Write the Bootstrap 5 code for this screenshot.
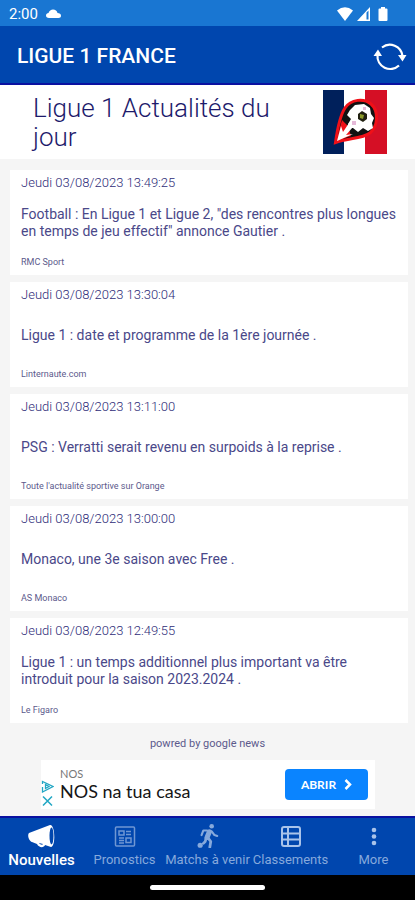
<!DOCTYPE html>
<html lang="fr">
<head>
<meta charset="utf-8">
<meta name="viewport" content="width=device-width, initial-scale=1">
<title>Ligue 1 France</title>
<link href="https://cdn.jsdelivr.net/npm/bootstrap@5.3.0/dist/css/bootstrap.min.css" rel="stylesheet">
<style>
  body { font-family: Roboto, "Liberation Sans", sans-serif; background: #f5f5f5; color: #1d1a6b; }
  svg { display: block; flex: none; }
  .status-bar { background: #1976d2; height: 26px; font-size: 15px; padding: 2px 27px 0 9px; }
  .app-bar { background: #0046ae; height: 59px; border-bottom: 2px solid #0a10a0; padding: 2px 8px 0 17px; }
  .app-title { font-size: 21px; font-weight: 500; line-height: 28px; }
  .hero { height: 74px; padding: 0 28px 0 33px; }
  .hero-title { font-size: 26px; font-weight: 300; line-height: 29px; max-width: 260px; padding-top: 2px; }
  .news { padding: 11px 7px 0 10px; gap: 7px; }
  .news-card { height: 105px; padding: 5px 9px 6px 11px; color: #4a4889; }
  .news-date { font-size: 13px; line-height: 16px; font-weight: 300; color: #2e2c78; }
  .news-title { font-size: 14px; line-height: 17px; }
  .news-source { font-size: 9px; line-height: 14px; color: #5c5a8c; }
  .powered { font-size: 11px; line-height: 14px; margin: 14px 0 9px; color: #5c5a8c; }
  .ad { margin: 0 40px 0 41px; height: 49px; padding-right: 7px; }
  .ad-marks { width: 15px; padding-top: 20px; gap: 3px; }
  .ad-brand { font-size: 11px; line-height: 12px; color: #777; }
  .ad-text { font-size: 18px; line-height: 22px; color: #151515; }
  .ad-text, .ad-brand, .ad-btn { font-family: Lato, sans-serif; }
  .ad-btn { background: #0a84ff; width: 83px; height: 31px; font-size: 12px; border-radius: 4px; }
  .tabs { background: #0046ae; border-top: 2px solid #0a10a0; height: 59px; }
  .tab { color: #86a9dc; font-size: 13px; line-height: 16px; padding-top: 6px; gap: 4px; flex: 1 1 0; min-width: 0; white-space: nowrap; }
  .tab.active { color: #fff; font-size: 15px; font-weight: 500; }
  .home-strip { height: 25px; }
  .home-pill { width: 115px; height: 5px; }
</style>
<script src="https://cdn.jsdelivr.net/npm/bootstrap@5.3.0/dist/js/bootstrap.bundle.min.js"></script>
</head>
<body class="min-vh-100 d-flex flex-column">
<div class="status-bar d-flex align-items-center text-white">
  <span>2:00</span>
  <svg class="ms-2" width="15" height="10" viewBox="0 0 15 10" fill="#fff"><path d="M3 9C1 9 0 8 0 6.500S1.200 4 2.500 4C3.200 2 5 .5 7 .5c2.300 0 4.100 1.500 4.500 3.500C13.500 4 15 5 15 6.700 15 8 14 9 12.500 9z"/></svg>
  <div class="ms-auto d-flex align-items-center">
    <svg width="16" height="14" viewBox="0 0 16 14" fill="#fff"><path d="M0 3.500Q8-3 16 3.500L8 14z"/></svg>
    <svg class="ms-1 me-2" width="13" height="14" viewBox="0 0 13 14" fill="#fff"><path fill-rule="evenodd" d="M0 14L13 0v14zM9.500 5.500v7H11.500V3.500z"/></svg>
    <svg width="10" height="14" viewBox="0 0 10 14" fill="#fff"><path d="M3 0h4v1.500h1.500q1 0 1 1v10.500q0 1-1 1h-7q-1 0-1-1V2.500q0-1 1-1H3z"/></svg>
  </div>
</div>
<header class="app-bar d-flex align-items-center justify-content-between text-white">
  <div class="app-title">LIGUE 1 FRANCE</div>
  <button type="button" class="btn p-0 border-0" aria-label="Actualiser">
    <svg width="34" height="30" viewBox="0 0 34 30" fill="none" stroke="#fff" stroke-width="2.200"><path d="M9 6.500A12.800 12.800 0 0 1 29.500 15M4.500 14A12.800 12.800 0 0 0 26 24.500"/><path d="M25 14h8.500L29.500 20.500zM.500 15L5 8.500 9 15z" fill="#fff" stroke="none"/></svg>
  </button>
</header>
<section class="hero bg-white d-flex align-items-center justify-content-between">
  <h1 class="hero-title mb-0">Ligue 1 Actualités du jour</h1>
  <svg width="64" height="64" viewBox="0 0 64 64">
    <path fill="#00205b" d="M0 0h21v64H0z"/><path fill="#d50f25" d="M42 0h22v64H42z"/>
    <path d="M12.500 52.500C14 42 16 27 22 18 28 9 41 8 48 14 56 21 55 36 47 43 39 49 25 48 12.500 52.500z" fill="#111" stroke="#f01018" stroke-width="3"/>
    <path d="M13 52L19 30 25 36 28 46 22 48z" fill="#f01018"/>
    <path d="M14 51L18 36 20 42 26 33 30 37 23 45 30 44z" fill="#fff"/>
    <path d="M27 20L32 15 41 14 47 18 48 24 51 28 49 33 50 38 45 41 40 38 35 42 30 38 26 38 25 34 28 29 24 25z" fill="#fff"/>
    <path d="M35 24l4-3 5 3v5l-4 3-5-3z" fill="#202010"/><path d="M37 24l4 1-1 4-3-1z" fill="#8a9a28"/>
    <path d="M29 31h4v4h-4zM40 17h3v3h-3z" fill="#e5b8d8"/>
  </svg>
</section>
<main class="news d-flex flex-column">
  <article class="news-card bg-white d-flex flex-column justify-content-between">
    <div class="news-date">Jeudi 03/08/2023 13:49:25</div>
    <div class="news-title">Football : En Ligue 1 et Ligue 2, "des rencontres plus longues en temps de jeu effectif" annonce Gautier .</div>
    <div class="news-source">RMC Sport</div>
  </article>
  <article class="news-card bg-white d-flex flex-column justify-content-between">
    <div class="news-date">Jeudi 03/08/2023 13:30:04</div>
    <div class="news-title">Ligue 1 : date et programme de la 1ère journée .</div>
    <div class="news-source">Linternaute.com</div>
  </article>
  <article class="news-card bg-white d-flex flex-column justify-content-between">
    <div class="news-date">Jeudi 03/08/2023 13:11:00</div>
    <div class="news-title">PSG : Verratti serait revenu en surpoids à la reprise .</div>
    <div class="news-source">Toute l'actualité sportive sur Orange</div>
  </article>
  <article class="news-card bg-white d-flex flex-column justify-content-between">
    <div class="news-date">Jeudi 03/08/2023 13:00:00</div>
    <div class="news-title">Monaco, une 3e saison avec Free .</div>
    <div class="news-source">AS Monaco</div>
  </article>
  <article class="news-card bg-white d-flex flex-column justify-content-between">
    <div class="news-date">Jeudi 03/08/2023 12:49:55</div>
    <div class="news-title">Ligue 1 : un temps additionnel plus important va être introduit pour la saison 2023.2024 .</div>
    <div class="news-source">Le Figaro</div>
  </article>
</main>
<p class="powered text-center">powred by google news</p>
<aside class="ad bg-white d-flex align-items-center">
  <div class="ad-marks d-flex flex-column align-self-start">
    <svg width="13" height="13" viewBox="0 0 13 13" fill="none" stroke="#22a7c4" stroke-width="1.300"><path d="M1.500 4V1.500L12 6.500 1.500 12V7M4.500 4.500v4L8 6.500z"/></svg>
    <svg width="13" height="10" viewBox="0 0 13 10" fill="none" stroke="#22a7c4" stroke-width="1.500"><path d="M2 .5l9 9M11 .5l-9 9"/></svg>
  </div>
  <div class="ms-1"><div class="ad-brand">NOS</div><div class="ad-text">NOS na tua casa</div></div>
  <button type="button" class="ad-btn btn ms-auto p-0 text-white fw-bold d-flex align-items-center justify-content-center gap-2">ABRIR
    <svg width="8" height="11" viewBox="0 0 8 11" fill="none" stroke="#fff" stroke-width="2.500"><path d="M1.500 1L6 5.500 1.500 10"/></svg>
  </button>
</aside>
<nav class="tabs d-flex mt-auto">
  <a href="#" class="tab active d-flex flex-column align-items-center text-decoration-none" aria-current="page">
    <svg width="28" height="24" viewBox="0 0 28 24"><path d="M1 9L22 1c5-1 6 21 1 22l-6-2c-1 3-6 3-8-1l-5-2c-3-1-5-7-3-9z" fill="#fff"/><ellipse cx="23.500" cy="12" rx="2" ry="8.500" fill="#0046ae"/><path d="M11 19c1 2 4 2 4 1z" fill="#0046ae"/></svg>
    <span>Nouvelles</span></a>
  <a href="#" class="tab d-flex flex-column align-items-center text-decoration-none">
    <svg width="24" height="24" viewBox="0 0 24 24" fill="none" stroke="#6f97d3" stroke-width="1.500"><rect x="2.500" y="3" width="19" height="19" rx="1"/><path d="M6 7h5v4H6zM13 7.500h5M13 10.500h5M6 14h5M6 16.500h5M6 19h5M13 14h5v4.500h-5z"/></svg>
    <span>Pronostics</span></a>
  <a href="#" class="tab d-flex flex-column align-items-center text-decoration-none">
    <svg width="24" height="24" viewBox="0 0 26 26" fill="none" stroke="#86a9dc" stroke-linecap="round" stroke-linejoin="round"><circle cx="17" cy="2.500" r="2.500" fill="#86a9dc" stroke="none"/><circle cx="4.500" cy="23" r="2.800" fill="#86a9dc" stroke="none"/><path d="M14.500 8.500l-2.500 6" stroke-width="5.500"/><path d="M12 7H8l-2 5M17 8l3 4 3 1" stroke-width="2.300"/><path d="M11 15l-1 4-2 2M13 15l3 4-1 6" stroke-width="3"/></svg>
    <span>Matchs à venir</span></a>
  <a href="#" class="tab d-flex flex-column align-items-center text-decoration-none">
    <svg width="24" height="24" viewBox="0 0 24 24" fill="none" stroke="#a9c3ea" stroke-width="2"><rect x="3" y="3" width="18" height="19" rx="2"/><path d="M9 3v19M3 9.500h18M3 15.500h18"/></svg>
    <span>Classements</span></a>
  <a href="#" class="tab d-flex flex-column align-items-center text-decoration-none">
    <svg width="24" height="24" viewBox="0 0 24 24" fill="#a9c3ea"><circle cx="12" cy="6" r="2.300"/><circle cx="12" cy="12.500" r="2.300"/><circle cx="12" cy="19" r="2.300"/></svg>
    <span>More</span></a>
</nav>
<div class="home-strip bg-black d-flex align-items-center justify-content-center"><div class="home-pill bg-white rounded-pill"></div></div>
</body>
</html>
